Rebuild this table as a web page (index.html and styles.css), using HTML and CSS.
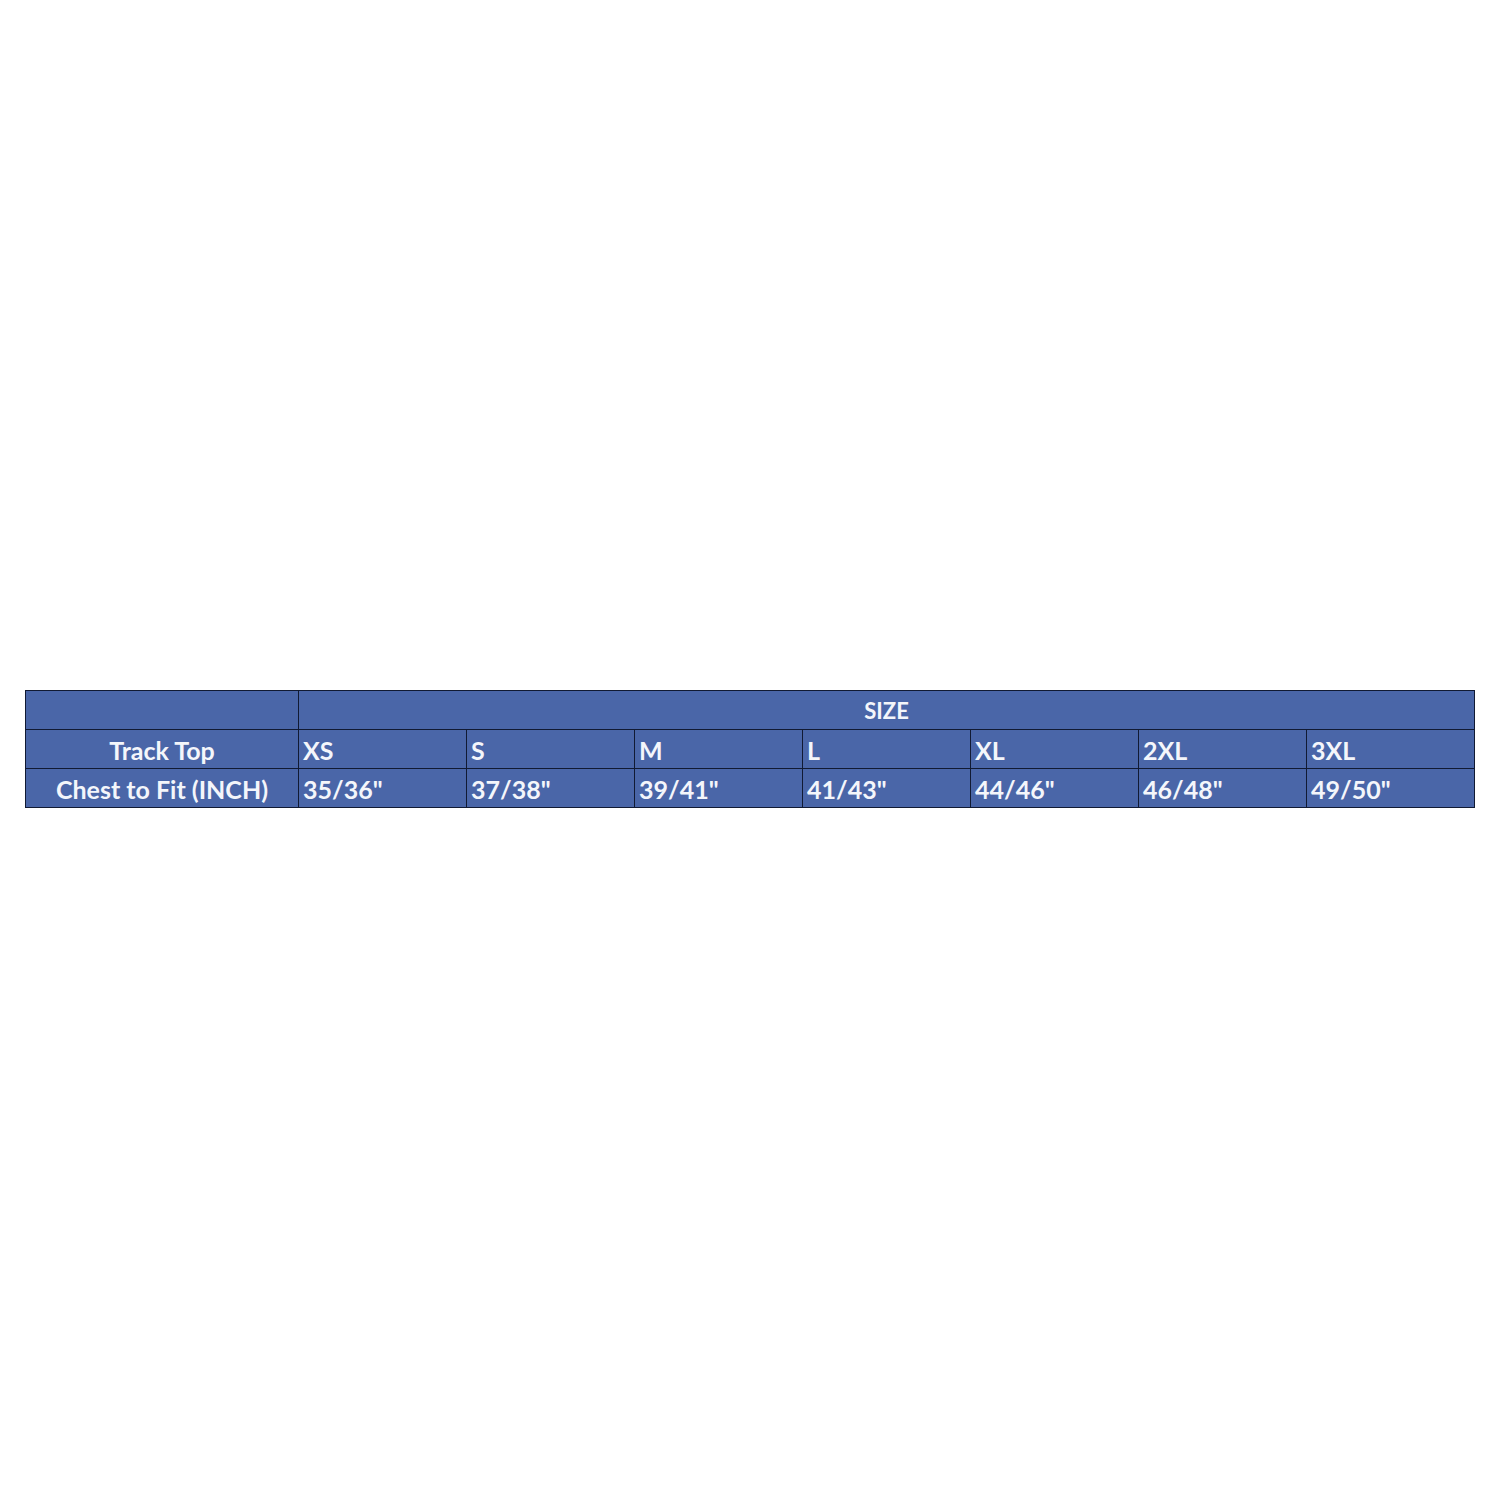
FILE: index.html
```html
<!DOCTYPE html>
<html>
<head>
<meta charset="utf-8">
<link rel="stylesheet" href="styles.css">
</head>
<body>
<div class="page">
  <table class="size-table">
    <colgroup>
      <col class="c-label">
      <col class="c-size"><col class="c-size"><col class="c-size"><col class="c-size"><col class="c-size"><col class="c-size"><col class="c-size">
    </colgroup>
    <tr>
      <td class="center"></td>
      <td class="center head" colspan="7">SIZE</td>
    </tr>
    <tr>
      <td class="center">Track Top</td>
      <td>XS</td><td>S</td><td>M</td><td>L</td><td>XL</td><td>2XL</td><td>3XL</td>
    </tr>
    <tr>
      <td class="center">Chest to Fit (INCH)</td>
      <td>35/36"</td><td>37/38"</td><td>39/41"</td><td>41/43"</td><td>44/46"</td><td>46/48"</td><td>49/50"</td>
    </tr>
  </table>
</div>
</body>
</html>
```

FILE: styles.css
```css
html, body {
  margin: 0;
  padding: 0;
  background: #ffffff;
}
.page {
  padding: 690px 25px 0 25px;
}
.size-table {
  width: 1450px;
  border-collapse: collapse;
  table-layout: fixed;
  font-family: Lato, "Open Sans", sans-serif;
  font-weight: 700;
  color: #f4f6fb;
  background: #4a66a8;
}
.c-label { width: 273px; }
.c-size { width: 168px; }
.size-table td {
  border: 1.5px solid #111a33;
  height: 36px;
  padding: 2px 0 0 4px;
  font-size: 25px;
  line-height: 36px;
  white-space: nowrap;
  vertical-align: middle;
}
.size-table td.center {
  text-align: center;
  padding-left: 0;
}
.size-table td.head {
  font-size: 22px;
  font-weight: 700;
}
```
